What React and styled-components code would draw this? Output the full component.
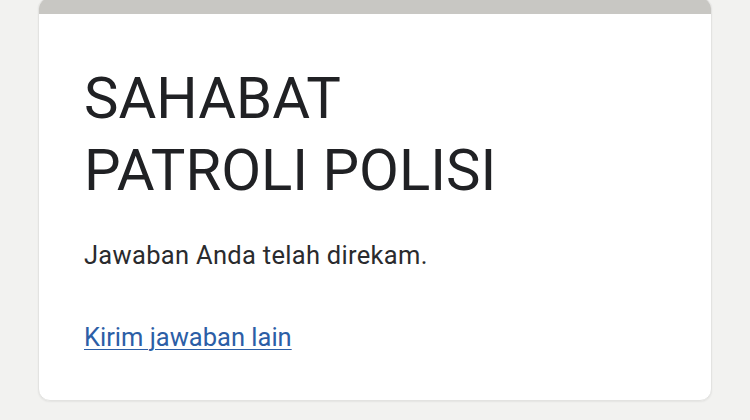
import React from 'react'
import styled, { createGlobalStyle } from 'styled-components'

const Global = createGlobalStyle`
  html, body {
    margin: 0;
    padding: 0;
    background: #f2f2f0;
  }
  body {
    font-family: Roboto, "Noto Sans", Arial, sans-serif;
  }
`

const Page = styled.div`
  width: 750px;
  height: 420px;
  overflow: hidden;
  padding: 0 38px;
  box-sizing: border-box;
`

const Card = styled.div`
  margin-top: -3px;
  background: #fff;
  border-radius: 12px;
  border: 1px solid #e3e3e1;
  box-shadow: 0 1px 2px rgba(0, 0, 0, 0.06);
  overflow: hidden;
  height: 404px;
  box-sizing: border-box;
`

const TopBar = styled.div`
  height: 16px;
  background: #c8c7c3;
`

const Body = styled.div`
  padding: 48px 45px 0;
`

const Title = styled.h1`
  margin: 0;
  font-weight: 400;
  font-size: 58px;
  line-height: 72px;
  color: #202124;
  letter-spacing: 0;
`

const Message = styled.p`
  margin: 33px 0 0;
  font-size: 25.5px;
  line-height: 32px;
  color: #2a2b2e;
  letter-spacing: 0.3px;
`

const Link = styled.a`
  display: inline-block;
  margin-top: 50px;
  font-size: 25.5px;
  line-height: 32px;
  color: #2c5ea6;
  text-decoration: underline;
  text-underline-offset: 3px;
  text-decoration-thickness: 1px;
`

export default function App() {
  return (
    <Page>
      <Global />
      <Card>
        <TopBar />
        <Body>
          <Title>
            SAHABAT
            <br />
            PATROLI POLISI
          </Title>
          <Message>Jawaban Anda telah direkam.</Message>
          <Link href="#">Kirim jawaban lain</Link>
        </Body>
      </Card>
    </Page>
  )
}
